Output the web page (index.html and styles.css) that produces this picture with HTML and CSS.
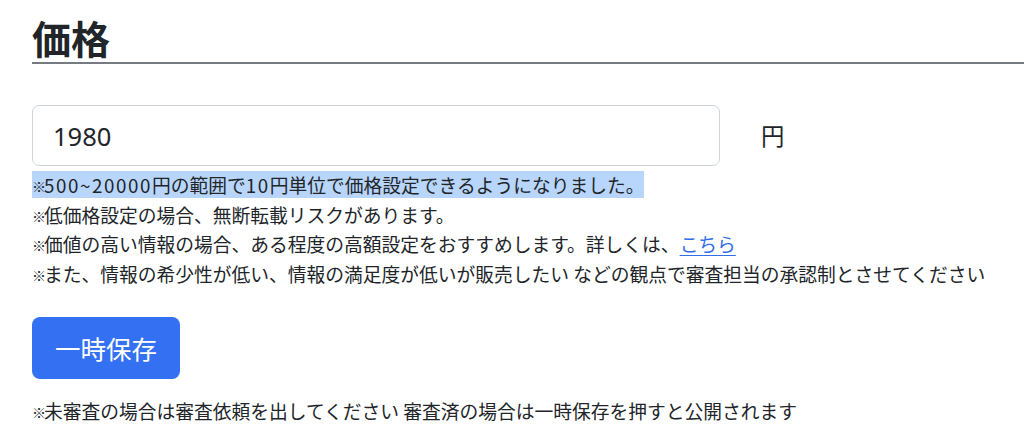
FILE: index.html
```html
<!DOCTYPE html>
<html lang="ja">
<head>
<meta charset="utf-8">
<title>価格</title>
<link rel="stylesheet" href="styles.css">
</head>
<body>
<div class="page">
  <h2 class="title">価格</h2>
  <div class="price-row">
    <div class="input-box">1980</div>
    <span class="unit">円</span>
  </div>
  <div class="notes">
    <p><span class="sel"><span class="km">※</span><span class="num">500~20000</span>円の範囲で<span class="num">10</span>円単位で価格設定できるようになりました。</span></p>
    <p><span class="km">※</span>低価格設定の場合、無断転載リスクがあります。</p>
    <p><span class="km">※</span>価値の高い情報の場合、ある程度の高額設定をおすすめします。詳しくは、<a class="link" href="#">こちら</a></p>
    <p><span class="km">※</span>また、情報の希少性が低い、情報の満足度が低いが販売したい などの観点で審査担当の承認制とさせてください</p>
  </div>
  <button class="btn" type="button">一時保存</button>
  <p class="footer-note"><span class="km">※</span>未審査の場合は審査依頼を出してください 審査済の場合は一時保存を押すと公開されます</p>
</div>
</body>
</html>
```

FILE: styles.css
```css
html, body {
  margin: 0;
  padding: 0;
  background: #ffffff;
}
body {
  font-family: "Noto Sans CJK JP", "Noto Sans", sans-serif;
  color: #212529;
  font-size: 18.75px;
}
.page {
  padding-left: 32px;
  padding-top: 12px;
}
.title {
  margin: 0;
  font-size: 39px;
  font-weight: 700;
  line-height: 50px;
  border-bottom: 2px solid #767b81;
  color: #212529;
}
.price-row {
  display: flex;
  align-items: center;
  margin-top: 41px;
  gap: 41px;
}
.input-box {
  box-sizing: border-box;
  width: 688px;
  height: 61px;
  border: 1px solid #ced4da;
  border-radius: 7px;
  padding-left: 20px;
  display: flex;
  align-items: center;
  font-size: 25.5px;
  font-family: "Noto Sans", "Noto Sans CJK JP", sans-serif;
  color: #212529;
}
.unit {
  font-size: 23.4px;
  line-height: 1;
}
.notes {
  margin-top: 4px;
}
.notes p, .footer-note {
  margin: 0;
  line-height: 29.7px;
  white-space: nowrap;
}
.sel {
  background: #b8d5fb;
}
.num {
  letter-spacing: 1.6px;
}
.km {
  font-size: 14px;
  line-height: 0;
  letter-spacing: -3px;
  margin-right: 1px;
  vertical-align: 1px;
}
.link {
  color: #2f6ee6;
  text-decoration: underline;
  text-underline-offset: 3px;
}
.btn {
  display: block;
  margin-top: 28px;
  width: 148px;
  height: 62px;
  border: none;
  border-radius: 8px;
  background: #3371f2;
  color: #ffffff;
  font-family: "Noto Sans CJK JP", sans-serif;
  font-size: 25.5px;
  padding: 0;
}
.footer-note {
  margin-top: 17px !important;
}
```
